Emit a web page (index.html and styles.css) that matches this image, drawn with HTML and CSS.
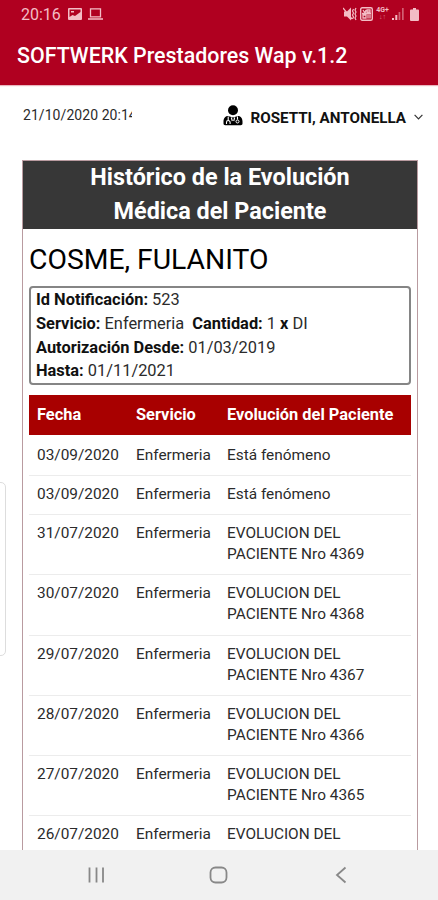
FILE: index.html
```html
<!DOCTYPE html>
<html lang="es">
<head>
    <meta charset="UTF-8">
    <meta name="viewport" content="width=device-width, initial-scale=1.0">
    <title>SOFTWERK Prestadores Wap</title>
    <link rel="stylesheet" href="styles.css">
</head>
<body>
<div class="phone">
    <header class="app-bar">
        <div class="status">
            <span class="clock">20:16</span>
            <svg class="ico-image" width="14" height="12" viewBox="0 0 14 12">
                <path fill="currentColor" fill-rule="evenodd" d="M1 0h12a1 1 0 0 1 1 1v10a1 1 0 0 1-1 1H1a1 1 0 0 1-1-1V1a1 1 0 0 1 1-1zM1.500 1.500v7.500l3-2 2.500 1 5.500-4V1.500zM3 3h3v1.500H3z"/>
            </svg>
            <svg class="ico-laptop" width="15" height="12" viewBox="0 0 15 12">
                <path fill="none" stroke="currentColor" stroke-width="1.300" d="M2.500 .8h10v8h-10zM0 11h15"/>
            </svg>
            <div class="status-right">
                <svg width="14" height="14" viewBox="0 0 14 14">
                    <path fill="currentColor" d="M1 4.500h3l4-4v13L4 9.500H1z"/>
                    <path fill="none" stroke="currentColor" stroke-width="1.200" d="M0 1l9 11M10.500 2l-1 2 1 2-1 2 1 2-1 2M13 1l-1 2 1 2-1 2 1 2-1 2 1 2"/>
                </svg>
                <svg width="13" height="14" viewBox="0 0 13 14">
                    <rect x=".7" y=".7" width="11.600" height="12.600" rx="1.500" fill="none" stroke="currentColor" stroke-width="1.400"/>
                    <path fill="none" stroke="currentColor" stroke-width="1.300" d="M3 3l2 3 1-3M7 3h3v2H7zM3 8h3v3H3zM8 7.500v4M10 7.500v4M2 6.500h9"/>
                </svg>
                <span class="net"><b>4G+</b><i>↓↑</i></span>
                <svg class="ico-signal" width="12" height="12" viewBox="0 0 12 12">
                    <path fill="currentColor" d="M0 10h2v2H0zM3.300 7h2v5h-2z"/>
                    <path fill="currentColor" opacity=".5" d="M6.600 4h1.700v8H6.600zM10 0h1.700v12H10z"/>
                </svg>
                <svg class="ico-battery" width="9" height="13" viewBox="0 0 9 13">
                    <path fill="currentColor" d="M3 0h3v1.500h2a1 1 0 0 1 1 1V12a1 1 0 0 1-1 1H1a1 1 0 0 1-1-1V2.500a1 1 0 0 1 1-1h2z"/>
                </svg>
            </div>
        </div>
        <h1 class="app-title">SOFTWERK Prestadores Wap v.1.2</h1>
    </header>

    <main class="content">
        <div class="user-row">
            <span class="date">21/10/2020 20:14</span>
            <div class="user">
                <svg width="20" height="21" viewBox="0 0 20 21">
                    <circle cx="10" cy="5.200" r="5"/>
                    <path d="M5 11l5 1.500 5-1.500c3 0 4.500 2.500 4.500 5.500v2c0 1-.7 1.700-1.700 1.700H2.200c-1 0-1.700-.7-1.700-1.700v-2C.5 13.500 2 11 5 11z"/>
                    <path fill="none" stroke="#fff" stroke-width="1.100" d="M5.200 11.500v4M3.500 19v-1.700a1.800 1.800 0 0 1 3.600 0V19M14.500 11.500v3M8.300 12.500l1 3.500M11.700 12.500l-1 3.500"/>
                    <circle cx="14.500" cy="16.500" r="1.500" fill="none" stroke="#fff"/>
                </svg>
                <span class="user-name">ROSETTI, ANTONELLA</span>
                <svg class="chevron" width="9" height="6" viewBox="0 0 9 6">
                    <path fill="none" stroke="#333" stroke-width="1.200" d="M.6 .8l3.900 4 3.900-4"/>
                </svg>
            </div>
        </div>

        <section class="card">
            <h2 class="card-title">Histórico de la Evolución<br>Médica del Paciente</h2>
            <div class="card-body">
                <h3 class="patient">COSME, FULANITO</h3>
                <div class="info">
                    <div><b>Id Notificación:</b> 523</div>
                    <div><b>Servicio:</b> Enfermeria&nbsp; <b>Cantidad:</b> 1 <b>x</b> DI</div>
                    <div><b>Autorización Desde:</b> 01/03/2019</div>
                    <div><b>Hasta:</b> 01/11/2021</div>
                </div>
                <table class="history">
                    <thead>
                    <tr><th class="col-date">Fecha</th><th class="col-service">Servicio</th><th>Evolución del Paciente</th></tr>
                    </thead>
                    <tbody>
                    <tr><td>03/09/2020</td><td>Enfermeria</td><td>Está fenómeno</td></tr>
                    <tr><td>03/09/2020</td><td>Enfermeria</td><td>Está fenómeno</td></tr>
                    <tr><td>31/07/2020</td><td>Enfermeria</td><td>EVOLUCION DEL<br>PACIENTE Nro 4369</td></tr>
                    <tr><td>30/07/2020</td><td>Enfermeria</td><td>EVOLUCION DEL<br>PACIENTE Nro 4368</td></tr>
                    <tr><td>29/07/2020</td><td>Enfermeria</td><td>EVOLUCION DEL<br>PACIENTE Nro 4367</td></tr>
                    <tr><td>28/07/2020</td><td>Enfermeria</td><td>EVOLUCION DEL<br>PACIENTE Nro 4366</td></tr>
                    <tr><td>27/07/2020</td><td>Enfermeria</td><td>EVOLUCION DEL<br>PACIENTE Nro 4365</td></tr>
                    <tr><td>26/07/2020</td><td>Enfermeria</td><td>EVOLUCION DEL</td></tr>
                    </tbody>
                </table>
            </div>
        </section>
        <!-- edge panel handle -->
        <div class="edge-handle"></div>
    </main>

    <nav class="nav-bar">
        <svg width="18" height="18" viewBox="0 0 18 18"><path d="M2.500 1.500v15M9.500 1.500v15M16 1.500v15"/></svg>
        <svg width="20" height="18" viewBox="0 0 20 18"><rect x="1.500" y="1.500" width="16" height="15" rx="5"/></svg>
        <svg width="18" height="18" viewBox="0 0 18 18"><path d="M12.500 1.500L4 9l8.500 7.500"/></svg>
    </nav>
</div>
</body>
</html>
```
FILE: styles.css
```css
* {
    box-sizing: border-box;
}

body {
    margin: 0;
    font-family: Roboto, "Liberation Sans", sans-serif;
    color: #2b2b2b;
    background: #fff;
}

h1, h2, h3 {
    margin: 0;
}

.phone {
    display: flex;
    flex-direction: column;
    height: 900px;
    overflow: hidden;
}

.app-bar {
    flex: none;
    height: 85px;
    background: #b00020;
    color: #fff;
    box-shadow: 0 1px 1px #e9b6bf;
}

.status {
    display: flex;
    align-items: center;
    height: 28px;
    padding: 0 19px 0 21px;
    color: #f3bdc5;
}

.clock {
    width: 47px;
    font-size: 16px;
}

.ico-laptop {
    margin-left: 6px;
}

.status-right {
    display: flex;
    align-items: center;
    margin-left: auto;
    gap: 3px;
}

.net {
    display: flex;
    flex-direction: column;
    align-items: center;
    width: 13px;
    font-size: 7px;
    line-height: 7px;
}

.net i {
    font-style: normal;
    opacity: 0.6;
}

.ico-battery {
    margin-left: 3px;
}

.app-title {
    padding-left: 17px;
    font-size: 21.4px;
    font-weight: 500;
    line-height: 56px;
    white-space: nowrap;
}

.content {
    position: relative;
    flex: 1;
    min-height: 0;
    padding: 0 20px 0 22px;
    overflow: hidden;
}

.user-row {
    display: flex;
    align-items: center;
    justify-content: space-between;
    height: 75px;
    padding-bottom: 12px;
}

.date {
    width: 110px;
    margin-top: -3px;
    padding-left: 1px;
    overflow: hidden;
    white-space: nowrap;
    font-size: 14px;
    letter-spacing: 0.06px;
}

.user {
    display: flex;
    align-items: center;
    margin: -3px -5px 0 0;
    color: #111;
}

.user-name {
    margin: 5px 8px 0 7px;
    font-size: 15.2px;
    font-weight: 700;
    white-space: nowrap;
}

.chevron {
    margin-top: 4px;
}

.card {
    height: 760px;
    border: 1px solid #b99ba0;
}

.card-title {
    height: 68px;
    background: #373737;
    color: #fff;
    font-size: 23.4px;
    font-weight: 700;
    line-height: 33.6px;
    text-align: center;
}

.card-body {
    padding: 0 6px;
}

.patient {
    height: 57px;
    font-size: 28.3px;
    font-weight: 400;
    line-height: 61px;
    color: #000;
    white-space: nowrap;
}

.info {
    height: 99px;
    padding: 0 5px;
    border: 2px solid #858585;
    border-radius: 4px;
    font-size: 16.4px;
    line-height: 23.8px;
    white-space: nowrap;
}

.info b {
    color: #111;
}

.history {
    width: 100%;
    margin-top: 10px;
    border-collapse: collapse;
    table-layout: fixed;
    font-size: 15.4px;
    line-height: 21.1px;
}

.history th {
    height: 40px;
    padding: 0 8px;
    background: #a80000;
    color: #fff;
    font-size: 16.4px;
    font-weight: 700;
    text-align: left;
    white-space: nowrap;
}

.history td {
    padding: 8px 8px 9px;
    border-bottom: 1px solid #ececec;
    vertical-align: top;
    white-space: nowrap;
}

.history tbody tr:first-child td {
    padding-top: 10px;
}

.col-date {
    width: 99px;
}

.col-service {
    width: 91px;
}

.edge-handle {
    position: absolute;
    left: -5px;
    top: 397px;
    width: 11px;
    height: 174px;
    border: 1px solid #ddd;
    border-radius: 5px;
}

.nav-bar {
    display: flex;
    flex: none;
    align-items: center;
    justify-content: space-between;
    height: 50px;
    padding: 0 87px;
    background: #f1f1f1;
}

.nav-bar svg {
    fill: none;
    stroke: #888;
    stroke-width: 1.8;
}
```
